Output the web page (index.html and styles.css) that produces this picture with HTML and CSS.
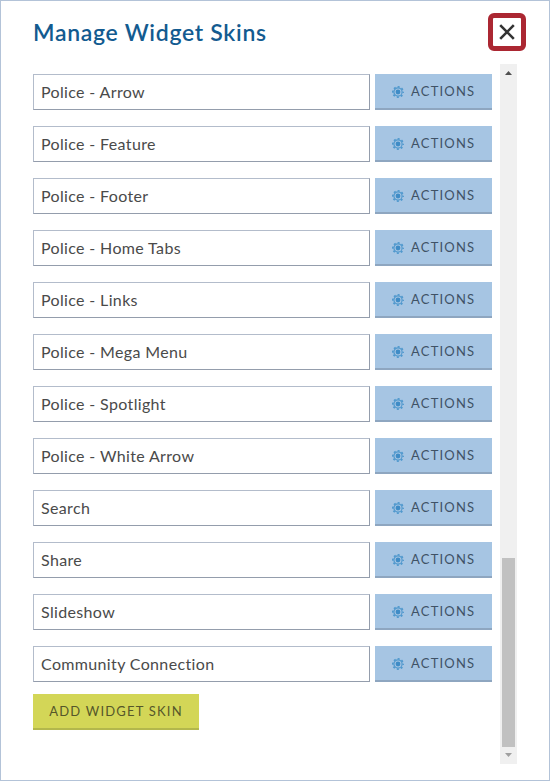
FILE: index.html
```html
<!DOCTYPE html>
<html lang="en">
<head>
    <meta charset="UTF-8">
    <meta name="viewport" content="width=device-width, initial-scale=1.0">
    <title>Manage Widget Skins</title>
    <link rel="stylesheet" href="styles.css">
</head>
<body>
    <svg class="sprite" aria-hidden="true">
        <symbol id="gear" viewBox="0 0 12 12">
            <circle cx="6" cy="6" r="5.2" fill="none" stroke="#4f98cd" stroke-width="1.6" stroke-dasharray="2 2.084" stroke-dashoffset="1"/>
            <circle cx="6" cy="6" r="4.1" fill="none" stroke="#4f98cd" stroke-width="1.2"/>
            <circle cx="6" cy="6" r="2.4" fill="#3f8cc6"/>
        </symbol>
    </svg>

    <div class="modal">
        <div class="modal-header">
            <h1>Manage Widget Skins</h1>
            <button class="close" aria-label="Close">
                <svg width="16" height="16" viewBox="0 0 16 16"><path d="M1.2 1.2L14.8 14.8M14.8 1.2L1.2 14.8" stroke="#333" stroke-width="2.6"/></svg>
            </button>
        </div>

        <div class="modal-body">
            <div class="content">
                <ul class="skins">
                    <li><div class="field">Police - Arrow</div><button class="btn actions"><svg class="gear"><use href="#gear"/></svg>ACTIONS</button></li>
                    <li><div class="field">Police - Feature</div><button class="btn actions"><svg class="gear"><use href="#gear"/></svg>ACTIONS</button></li>
                    <li><div class="field">Police - Footer</div><button class="btn actions"><svg class="gear"><use href="#gear"/></svg>ACTIONS</button></li>
                    <li><div class="field">Police - Home Tabs</div><button class="btn actions"><svg class="gear"><use href="#gear"/></svg>ACTIONS</button></li>
                    <li><div class="field">Police - Links</div><button class="btn actions"><svg class="gear"><use href="#gear"/></svg>ACTIONS</button></li>
                    <li><div class="field">Police - Mega Menu</div><button class="btn actions"><svg class="gear"><use href="#gear"/></svg>ACTIONS</button></li>
                    <li><div class="field">Police - Spotlight</div><button class="btn actions"><svg class="gear"><use href="#gear"/></svg>ACTIONS</button></li>
                    <li><div class="field">Police - White Arrow</div><button class="btn actions"><svg class="gear"><use href="#gear"/></svg>ACTIONS</button></li>
                    <li><div class="field">Search</div><button class="btn actions"><svg class="gear"><use href="#gear"/></svg>ACTIONS</button></li>
                    <li><div class="field">Share</div><button class="btn actions"><svg class="gear"><use href="#gear"/></svg>ACTIONS</button></li>
                    <li><div class="field">Slideshow</div><button class="btn actions"><svg class="gear"><use href="#gear"/></svg>ACTIONS</button></li>
                    <li><div class="field">Community Connection</div><button class="btn actions"><svg class="gear"><use href="#gear"/></svg>ACTIONS</button></li>
                </ul>
                <button class="btn add">ADD WIDGET SKIN</button>
            </div>

            <div class="scrollbar">
                <svg width="7" height="4" viewBox="0 0 7 4"><path d="M0 4L3.5 0L7 4Z" fill="#505050"/></svg>
                <div class="thumb"></div>
                <svg width="7" height="4" viewBox="0 0 7 4"><path d="M0 0L3.5 4L7 0Z" fill="#a0a0a0"/></svg>
            </div>
        </div>
    </div>
</body>
</html>
```
FILE: styles.css
```css
* {
    margin: 0;
    padding: 0;
    box-sizing: border-box;
}

body {
    background: #fff;
    color: #4a4a4a;
    font-family: Lato, "Open Sans", sans-serif;
}

.sprite {
    display: none;
}

.modal {
    height: 781px;
    padding: 12px 32px 16px;
    border: 1px solid #b3c3d8;
}

.modal-header {
    display: flex;
    justify-content: space-between;
    height: 51px;
}

.modal-header h1 {
    font-size: 23px;
    font-weight: 600;
    line-height: 38px;
    letter-spacing: 0.7px;
    color: #135b90;
}

.close {
    display: flex;
    align-items: center;
    justify-content: center;
    width: 38px;
    height: 38px;
    margin-right: -9px;
    border: 5px solid #ab2732;
    border-radius: 6px;
    background: #fff;
}

.modal-body {
    display: flex;
    justify-content: space-between;
    height: 700px;
}

.content {
    width: 459px;
    padding-top: 10px;
}

.skins {
    list-style: none;
}

.skins li {
    display: flex;
    gap: 5px;
    margin-bottom: 16px;
}

.field {
    width: 337px;
    height: 36px;
    padding-left: 7px;
    border: 1px solid #b3bccb;
    border-bottom-color: #949dac;
    border-right-color: #949dac;
    font-size: 16px;
    line-height: 33px;
    letter-spacing: 0.35px;
}

.btn {
    height: 36px;
    border: none;
    font-family: inherit;
    font-size: 13px;
    letter-spacing: 1.2px;
    color: #3f5266;
}

.actions {
    display: flex;
    align-items: center;
    width: 117px;
    padding-left: 17px;
    border-bottom: 2px solid #8ea6c0;
    background: #a6c5e3;
}

.gear {
    width: 12px;
    height: 12px;
    margin: 2px 7px 0 0;
}

.add {
    display: block;
    width: 166px;
    margin-top: -4px;
    border-bottom: 2px solid #b3b74c;
    background: #d3d657;
    color: #56562a;
}

.scrollbar {
    display: flex;
    flex-direction: column;
    align-items: center;
    justify-content: space-between;
    width: 17px;
    padding: 7px 0;
    background: #f0f0f0;
}

.thumb {
    width: 13px;
    height: 189px;
    margin: auto 0 6px;
    background: #c1c1c1;
}
```
